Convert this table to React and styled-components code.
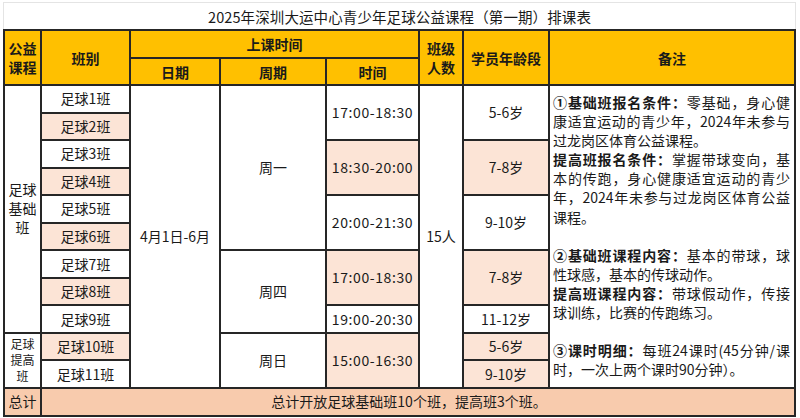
import React from 'react'
import styled, { createGlobalStyle } from 'styled-components'

const GlobalStyle = createGlobalStyle`
  html, body {
    margin: 0;
    padding: 0;
    background: #ffffff;
  }
  body {
    font-family: "Noto Sans CJK SC", "Noto Sans", sans-serif;
    color: #111111;
  }
`

const tones = {
  white: '#ffffff',
  peach: '#fce4d6',
  total: '#f8cbad',
  head: '#ffc000',
}

const rows = [
  [
    { lines: ['足球', '基础', '班'], rowSpan: 9 },
    { text: '足球1班' },
    { text: '4月1日-6月', rowSpan: 11 },
    { text: '周一', rowSpan: 6 },
    { text: '17:00-18:30', rowSpan: 2, time: true },
    { text: '15人', rowSpan: 11 },
    { text: '5-6岁', rowSpan: 2 },
    { notes: true, rowSpan: 11 },
  ],
  [{ text: '足球2班', tone: 'peach' }],
  [
    { text: '足球3班' },
    { text: '18:30-20:00', rowSpan: 2, tone: 'peach', time: true },
    { text: '7-8岁', rowSpan: 2, tone: 'peach' },
  ],
  [{ text: '足球4班', tone: 'peach' }],
  [
    { text: '足球5班' },
    { text: '20:00-21:30', rowSpan: 2, time: true },
    { text: '9-10岁', rowSpan: 2 },
  ],
  [{ text: '足球6班', tone: 'peach' }],
  [
    { text: '足球7班' },
    { text: '周四', rowSpan: 3 },
    { text: '17:00-18:30', rowSpan: 2, tone: 'peach', time: true },
    { text: '7-8岁', rowSpan: 2, tone: 'peach' },
  ],
  [{ text: '足球8班', tone: 'peach' }],
  [
    { text: '足球9班' },
    { text: '19:00-20:30', time: true },
    { text: '11-12岁' },
  ],
  [
    { lines: ['足球', '提高', '班'], rowSpan: 2, small: true },
    { text: '足球10班', tone: 'peach' },
    { text: '周日', rowSpan: 2 },
    { text: '15:00-16:30', rowSpan: 2, tone: 'peach', time: true },
    { text: '5-6岁', tone: 'peach' },
  ],
  [{ text: '足球11班' }, { text: '9-10岁', tone: 'peach' }],
]

// notes column, one entry per visual line
const notes = [
  { bold: '①基础班报名条件：', text: '零基础，身心健', full: true },
  { text: '康适宜运动的青少年，2024年未参与', full: true },
  { text: '过龙岗区体育公益课程。' },
  { bold: '提高班报名条件：', text: '掌握带球变向，基', full: true },
  { text: '本的传跑，身心健康适宜运动的青少', full: true },
  { text: '年，2024年未参与过龙岗区体育公益', full: true },
  { text: '课程。' },
  { text: '' },
  { bold: '②基础班课程内容：', text: '基本的带球，球', full: true },
  { text: '性球感，基本的传球动作。' },
  { bold: '提高班课程内容：', text: '带球假动作，传接', full: true },
  { text: '球训练，比赛的传跑练习。' },
  { text: '' },
  { bold: '③课时明细：', text: '每班24课时(45分钟/课', full: true },
  { text: '时，一次上两个课时90分钟）。' },
]

const widths = [37, 89, 90, 106, 93, 44, 86, 246]

function App() {
  return (
    <Page>
      <GlobalStyle />
      <Title>2025年深圳大运中心青少年足球公益课程（第一期）排课表</Title>
      <Sheet>
        <colgroup>
          {widths.map((w, i) => (
            <col key={i} style={{ width: w }} />
          ))}
        </colgroup>
        <thead>
          <HeadRow $h={28}>
            <Head rowSpan={2}>
              <Stack>
                <span>公益</span>
                <span>课程</span>
              </Stack>
            </Head>
            <Head rowSpan={2}>班别</Head>
            <Head colSpan={3}>上课时间</Head>
            <Head rowSpan={2}>
              <Stack>
                <span>班级</span>
                <span>人数</span>
              </Stack>
            </Head>
            <Head rowSpan={2}>学员年龄段</Head>
            <Head rowSpan={2}>备注</Head>
          </HeadRow>
          <HeadRow $h={27}>
            <Head>日期</Head>
            <Head>周期</Head>
            <Head>时间</Head>
          </HeadRow>
        </thead>
        <tbody>
          {rows.map((cells, r) => (
            <Row key={r}>
              {cells.map((c, i) => {
                if (c.notes) {
                  return (
                    <NotesCell key={i} rowSpan={c.rowSpan}>
                      {notes.map((n, j) => (
                        <NoteLine key={j} $full={n.full}>
                          {n.bold && <Strong>{n.bold}</Strong>}
                          {n.text || '\u00a0'}
                        </NoteLine>
                      ))}
                    </NotesCell>
                  )
                }
                return (
                  <Cell
                    key={i}
                    rowSpan={c.rowSpan}
                    $tone={c.tone || 'white'}
                    $time={c.time}
                  >
                    {c.lines ? (
                      <Stack $small={c.small}>
                        {c.lines.map((l) => (
                          <span key={l}>{l}</span>
                        ))}
                      </Stack>
                    ) : (
                      c.text
                    )}
                  </Cell>
                )
              })}
            </Row>
          ))}
          <Row>
            <Cell $tone="total">总计</Cell>
            <Cell $tone="total" colSpan={7} $shift>
              总计开放足球基础班10个班，提高班3个班。
            </Cell>
          </Row>
        </tbody>
      </Sheet>
    </Page>
  )
}

const Page = styled.div`
  width: 800px;
  height: 418px;
  padding: 2px 4px 0 3px;
  box-sizing: border-box;
  overflow: hidden;
`

const Title = styled.div`
  height: 26px;
  display: flex;
  align-items: center;
  justify-content: center;
  border: 1px solid #e4e4e4;
  border-bottom: none;
  font-size: 14.5px;
  color: #1a1a1a;
  letter-spacing: 0.1px;
`

const Sheet = styled.table`
  width: 792px;
  table-layout: fixed;
  border-collapse: collapse;
  font-size: 14px;
`

const HeadRow = styled.tr`
  height: ${(p) => p.$h}px;
`

const Row = styled.tr`
  height: 27.55px;
`

const Head = styled.th`
  background: ${tones.head};
  border: 2px solid #262626;
  padding: 0;
  font-size: 14px;
  font-weight: 700;
  color: #1a1a1a;
  text-align: center;
  vertical-align: middle;
`

const Stack = styled.div`
  display: flex;
  flex-direction: column;
  align-items: center;
  font-size: ${(p) => (p.$small ? '12px' : '14px')};
  line-height: ${(p) => (p.$small ? '16px' : '19px')};
`

const Cell = styled.td`
  background: ${(p) => tones[p.$tone]};
  border: 2px solid #262626;
  padding: 0 ${(p) => (p.$shift ? '18px' : '0')} 0 0;
  text-align: center;
  vertical-align: middle;
  color: #1a1a1a;
  white-space: nowrap;
  letter-spacing: ${(p) => (p.$time ? '0.6px' : '0')};
  line-height: 19px;
`

const NotesCell = styled.td`
  background: #ffffff;
  border: 2px solid #262626;
  padding: 7px 4px 0 3px;
  vertical-align: top;
  color: #1a1a1a;
`

const NoteLine = styled.div`
  line-height: 19.1px;
  font-size: 14px;
  white-space: nowrap;
  text-align: ${(p) => (p.$full ? 'justify' : 'left')};
  text-align-last: ${(p) => (p.$full ? 'justify' : 'left')};
`

const Strong = styled.b`
  font-weight: 700;
`

export default App
